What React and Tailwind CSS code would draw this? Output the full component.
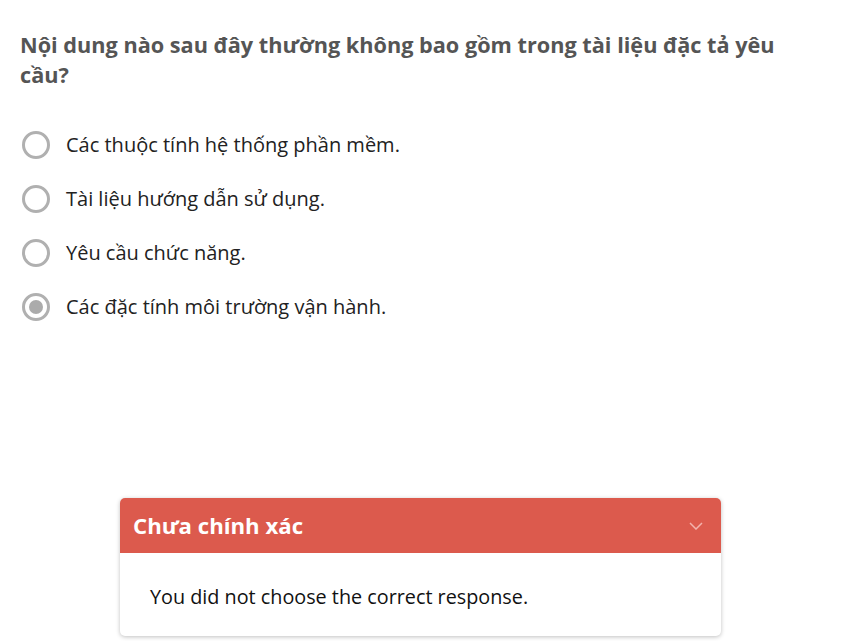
import { useState } from 'react';

const options = [
  'Các thuộc tính hệ thống phần mềm.',
  'Tài liệu hướng dẫn sử dụng.',
  'Yêu cầu chức năng.',
  'Các đặc tính môi trường vận hành.',
];

const Radio = ({ checked }) => (
  <span className="w-7 h-7 rounded-full border-[3px] border-[#b0b0b0] bg-white flex items-center justify-center shrink-0">
    {checked && <span className="w-[14px] h-[14px] rounded-full bg-[#ababab]" />}
  </span>
);

const App = () => {
  const [selected, setSelected] = useState(3);

  return (
    <div className="w-[850px] h-[641px] bg-white overflow-hidden font-['Open_Sans',sans-serif]">
      <div className="pl-5 pr-[40px] pt-[30px]">
        {/* Question */}
        <h2 className="text-[21.7px] leading-[30px] font-bold text-[#555555]">
          Nội dung nào sau đây thường không bao gồm trong tài liệu đặc tả yêu cầu?
        </h2>

        {/* Options */}
        <div className="mt-[28px]">
          {options.map((opt, i) => (
            <label
              key={i}
              onClick={() => setSelected(i)}
              className="h-[54px] flex items-center gap-4 pl-[2px] cursor-pointer"
            >
              <Radio checked={selected === i} />
              <span className="text-[20px] text-[#222222]">{opt}</span>
            </label>
          ))}
        </div>
      </div>

      {/* Feedback */}
      <div className="ml-[120px] mt-[164px] w-[601px] rounded-[5px] bg-white shadow-[0_1px_4px_rgba(0,0,0,0.25)] overflow-hidden">
        <div className="h-[55px] bg-[#dc5a4d] flex items-center justify-between pl-[13px] pr-[18px]">
          <span className="text-[22.2px] font-bold text-white">Chưa chính xác</span>
          <svg width="14" height="8" viewBox="0 0 14 8" fill="none">
            <path d="M1 1l6 6 6-6" stroke="#f3b3ad" strokeWidth="1.5" />
          </svg>
        </div>
        <div className="pl-[30px] pt-[30px] pb-[26px] text-[19.8px] leading-[27px] text-[#111111]">
          You did not choose the correct response.
        </div>
      </div>
    </div>
  );
};

export default App;
